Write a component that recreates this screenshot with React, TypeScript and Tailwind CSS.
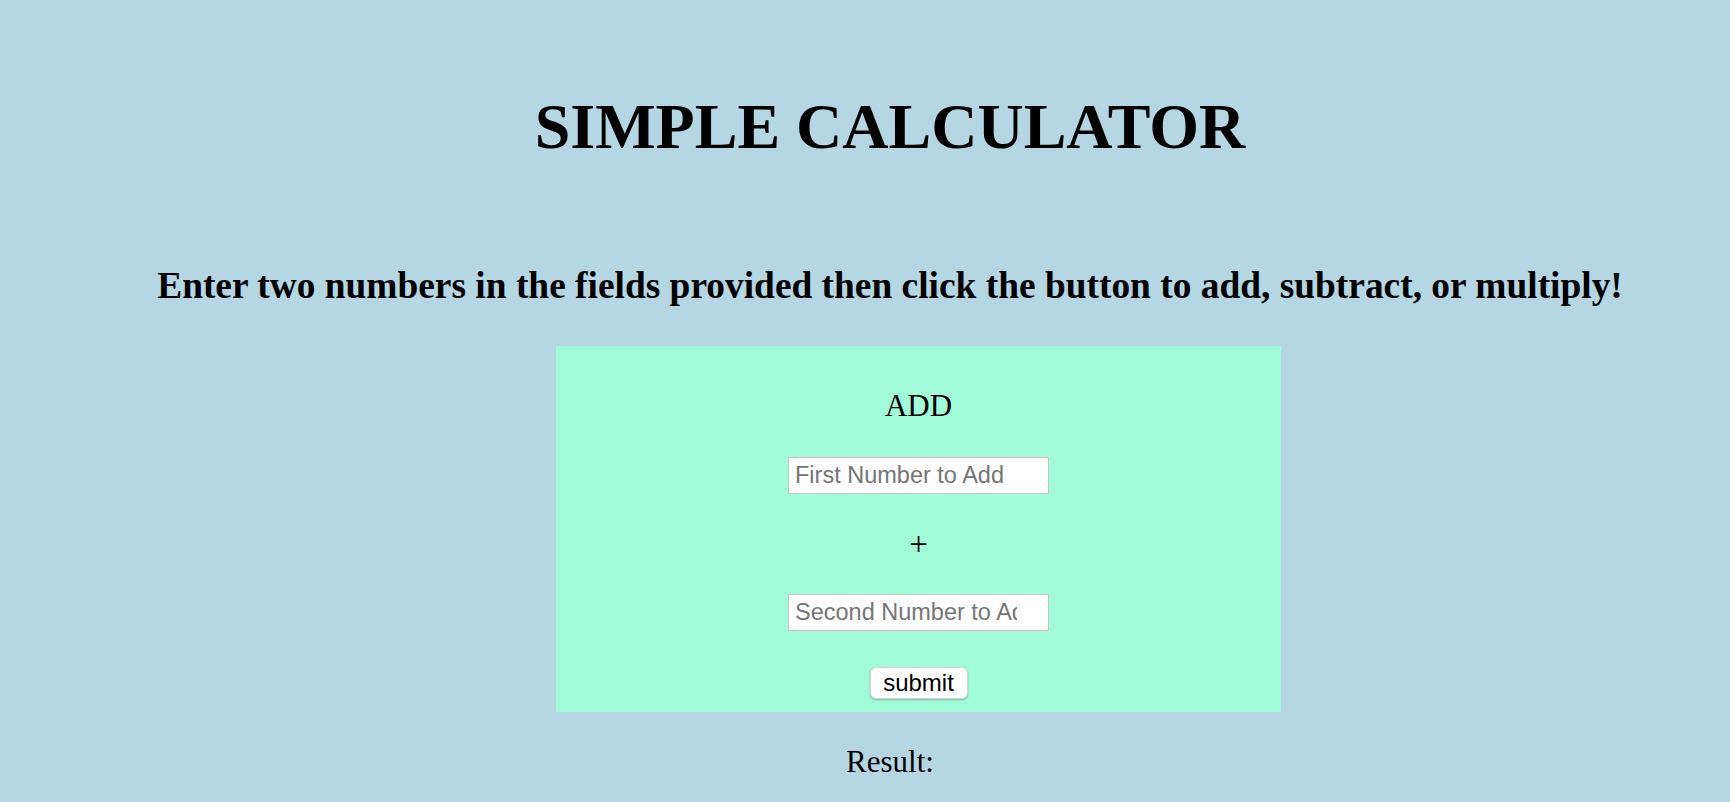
const serif = "font-['Liberation_Serif','Times_New_Roman',serif]";

function NumberField({ placeholder }: { placeholder: string }) {
  return (
    <input
      type="text"
      placeholder={placeholder}
      className="block h-[37px] w-[261px] border border-[#c4c4c4] bg-white pl-[6px] pr-[31px] font-['Liberation_Sans',Arial,sans-serif] text-[23.5px] text-black outline-none placeholder:text-[#757575]"
    />
  );
}

export default function App() {
  return (
    <div className={`min-h-[802px] bg-[#b4d7e3] pl-[50px] text-black ${serif}`}>
      <h1 className="pt-[95px] text-center text-[64px] leading-[64px] font-bold">
        SIMPLE CALCULATOR
      </h1>
      <h2 className="mt-[109px] text-center text-[37.4px] leading-[36px] font-bold">
        Enter two numbers in the fields provided then click the button to add, subtract, or multiply!
      </h2>

      <div className="mt-[42px] flex justify-center pl-[57px]">
        <form
          className="flex w-[725px] flex-col items-center bg-[#a1fad8] pt-[44px] pb-[13px]"
          onSubmit={(e) => e.preventDefault()}
        >
          <h3 className="text-[31px] leading-[31px]">ADD</h3>
          <div className="mt-[36px]">
            <NumberField placeholder="First Number to Add" />
          </div>
          <div className="mt-[35px] text-[33px] leading-[30px]">+</div>
          <div className="mt-[35px]">
            <NumberField placeholder="Second Number to Add" />
          </div>
          <button
            type="submit"
            className="mt-[36px] h-[32px] w-[98px] rounded-[6px] border border-[#d4d4d4] bg-white font-['Liberation_Sans',Arial,sans-serif] text-[24px] leading-[30px] text-black shadow-[0_1px_2px_rgba(0,0,0,0.25)]"
          >
            submit
          </button>
        </form>
      </div>

      <p className="mt-[34px] text-center text-[31px] leading-[31px]">Result:</p>
    </div>
  );
}
